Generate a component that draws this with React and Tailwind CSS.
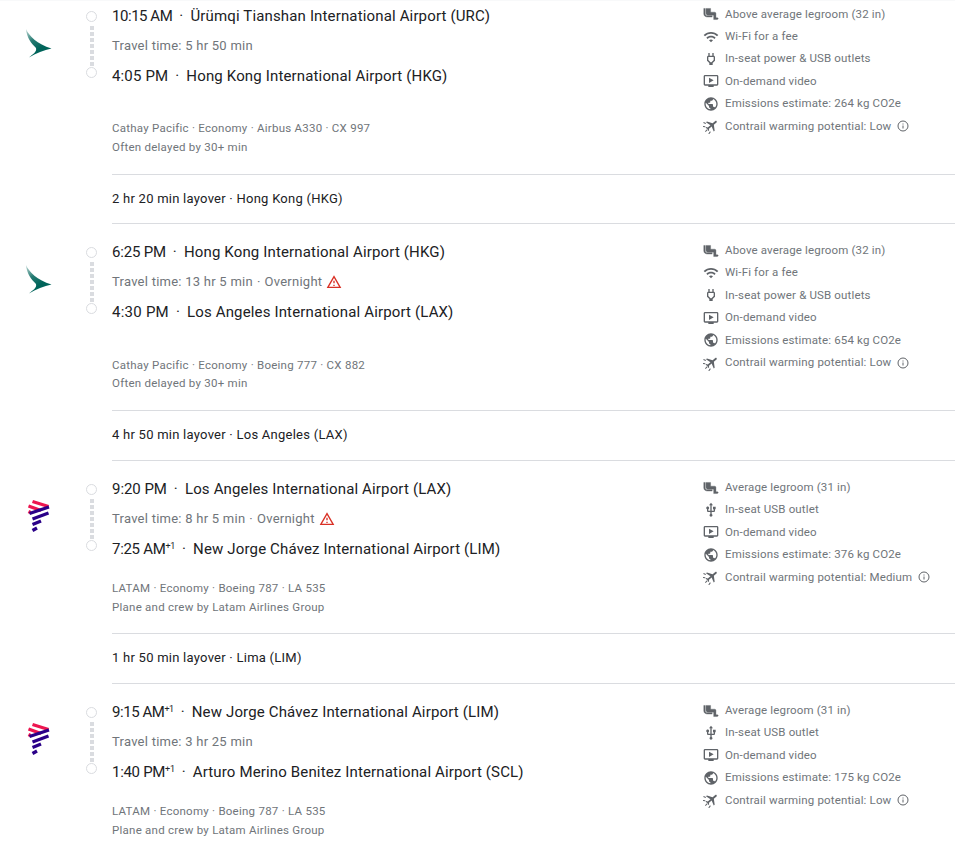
const P = {
  seat: "M5 12V3H3v9c0 2.76 2.24 5 5 5h6v-2H8c-1.66 0-3-1.34-3-3zm15.5 6H19v-7c0-1.1-.9-2-2-2h-5V3H6v8c0 1.65 1.35 3 3 3h7v7h4.5c.83 0 1.5-.67 1.5-1.5s-.67-1.5-1.5-1.5z",
  wifi: "M1 9l2 2c4.97-4.97 13.03-4.97 18 0l2-2C16.93 2.93 7.08 2.93 1 9zm8 8l3 3 3-3c-1.65-1.66-4.34-1.66-6 0zm-4-4l2 2c2.76-2.76 7.24-2.76 10 0l2-2C15.14 9.14 8.87 9.14 5 13z",
  power: "M16.01 7L16 3h-2v4h-4V3H8v4h-.01C7 7 6 8 6 9v5.49L9.5 18v3h5v-3l3.5-3.51V9c0-1-1-2-1.99-2zM16 13.66L12.67 17h-1.34L8 13.66V9.02L16 9z",
  usb: "M15 7v4h1v2h-3V5h2l-3-4-3 4h2v8H8v-2.07c.7-.37 1.2-1.08 1.2-1.93 0-1.21-.99-2.2-2.2-2.2-1.21 0-2.2.99-2.2 2.2 0 .85.5 1.56 1.2 1.93V13c0 1.11.89 2 2 2h3v3.05c-.71.37-1.2 1.1-1.2 1.95 0 1.22.99 2.2 2.2 2.2 1.21 0 2.2-.98 2.2-2.2 0-.85-.49-1.58-1.2-1.95V15h3c1.11 0 2-.89 2-2v-2h1V7h-4z",
  video: "M21 3H3c-1.11 0-2 .89-2 2v12c0 1.1.89 2 2 2h5v2h8v-2h5c1.1 0 1.99-.9 1.99-2L23 5c0-1.11-.9-2-2-2zm0 14H3V5h18v12zm-5-6l-7 4V7z",
  globe: "M12 2C6.48 2 2 6.48 2 12s4.48 10 10 10 10-4.48 10-10S17.52 2 12 2zm-1 17.93c-3.95-.49-7-3.85-7-7.93 0-.62.08-1.21.21-1.79L9 15v1c0 1.1.9 2 2 2v1.93zm6.9-2.54c-.26-.81-1-1.39-1.9-1.39h-1v-3c0-.55-.45-1-1-1H8v-2h2c.55 0 1-.45 1-1V7h2c1.1 0 2-.9 2-2v-.41c2.93 1.19 5 4.06 5 7.41 0 2.08-.8 3.97-2.1 5.39z",
};

function Icon({ name }) {
  if (name === "contrail") {
    return (
      <svg viewBox="0 0 24 24" className="w-4 h-4 shrink-0 fill-[#5f6368]">
        <path transform="rotate(50 12 12) translate(1 -1) scale(.95)" d="M21 16v-2l-8-5V3.5c0-.83-.67-1.5-1.5-1.5S10 2.67 10 3.5V9l-8 5v2l8-2.5V19l-2 1.5V22l3.5-1 3.5 1v-1.5L13 19v-5.5l8 2.5z" />
        <path d="M1 6l3.5 1.5-.6 1.4L.4 7.4zM0 12l3.5.4-.2 1.5L0 13.5zM3 20l3-3 1 1-3 3zM8 23.5l2.5-3.5 1.2.9-2.5 3.5z" />
      </svg>
    );
  }
  if (name === "seat") {
    return (
      <svg viewBox="2 -1 21 26" preserveAspectRatio="none" className="w-4 h-4 shrink-0 fill-[#5f6368] stroke-[#5f6368] stroke-[0.5]">
        <path d={P.seat} />
      </svg>
    );
  }
  return (
    <svg viewBox="0 0 24 24" className="w-4 h-4 shrink-0 fill-[#5f6368]">
      <path d={P[name]} />
    </svg>
  );
}

function Info() {
  return (
    <svg viewBox="0 0 24 24" className="w-3 h-3 fill-none stroke-[#5f6368] stroke-2">
      <circle cx="12" cy="12" r="10" />
      <path d="M12 11v6M12 7v2" />
    </svg>
  );
}

function Warn() {
  return (
    <svg viewBox="0 0 24 24" className="w-[16px] h-[16px] ml-[4px] fill-[#d93025]">
      <path d="M1 21h22L12 2 1 21zm3.47-2L12 5.99 19.53 19H4.47zM11 16h2v2h-2zm0-6h2v4h-2z" />
    </svg>
  );
}

function Cathay({ id }) {
  return (
    <svg viewBox="0 0 36 36" className="w-9 h-9 mt-[24px] ml-[22px]">
      <defs>
        <linearGradient id={id} x1="4" y1="4" x2="17" y2="24" gradientUnits="userSpaceOnUse">
          <stop offset="0" stopColor="#00645a" stopOpacity="0.25" />
          <stop offset="0.55" stopColor="#00645a" stopOpacity="0.85" />
          <stop offset="1" stopColor="#00645a" />
        </linearGradient>
      </defs>
      <path fill={`url(#${id})`} d="M4 4C7 11 15 19 29.5 23.5C22 25 14 28.5 7 32.5C11 29 15 27 14 23C9 18 5 13 4 4Z" />
    </svg>
  );
}

function Latam() {
  return (
    <svg viewBox="0 0 36 36" className="w-9 h-9 mt-[22px] ml-[22px]" fill="none" strokeWidth="3.3">
      <g stroke="#ed1650">
        <path d="M10.5 5.5L26.5 10.5" />
        <path d="M6.5 10L19 14.5" />
        <path d="M6.5 15.5L8.5 16.5" />
      </g>
      <g stroke="#2a0088">
        <path d="M7.5 17.5L27 11" />
        <path d="M10.5 23L26.5 17" />
        <path d="M10.5 28.5L19 25" />
        <path d="M10.5 34.5L15 32" />
      </g>
    </svg>
  );
}

function Timeline() {
  return (
    <div className="w-[11px] shrink-0 mt-[10px] flex flex-col items-center">
      <div className="w-[11px] h-[11px] rounded-full border-[1.5px] border-[#dadce0]" />
      <div className="mt-[4px] mb-[1px] flex flex-col gap-[2px]">
        {[0, 1, 2, 3, 4, 5, 6].map((i) => (
          <div key={i} className="w-[4px] h-[4px] bg-[#dadce0]" />
        ))}
      </div>
      <div className="w-[11px] h-[11px] rounded-full border-[1.5px] border-[#dadce0]" />
    </div>
  );
}

function Stop({ time, sup, place, cls }) {
  return (
    <div className="h-[30px] flex items-center text-[15px] tracking-[0.15px] text-[#202124] whitespace-nowrap">
      <span className={cls}>
        {time}
        {sup && <sup className="text-[9px] top-[-5px] leading-none">+1</sup>}
      </span>
      <span className="mx-[7px]">·</span>
      <span>{place}</span>
    </div>
  );
}

function Amenity({ icon, children, info }) {
  return (
    <div className="h-[22.4px] flex items-center gap-[6px] text-[11.5px] tracking-[0.15px] text-[#70757a] whitespace-nowrap">
      <Icon name={icon} />
      <span>{children}</span>
      {info && <Info />}
    </div>
  );
}

function Segment({ logo, a, b, travel, overnight, meta1, meta2, metaClass, amenities, ptClass }) {
  return (
    <div className="flex">
      <div className="w-[86px] shrink-0">{logo}</div>
      <Timeline />
      <div className="ml-[15px] flex-1 flex">
        <div className="w-[591px] shrink-0">
          <Stop {...a} />
          <div className="h-[30px] flex items-center text-[13px] tracking-[0.25px] text-[#70757a] whitespace-nowrap">
            {travel}
            {overnight && <><span className="mx-[4px]">·</span>Overnight<Warn /></>}
          </div>
          <Stop {...b} />
          <div className={`text-[11.5px] tracking-[0.25px] text-[#70757a] ${metaClass}`}>
            <div>{meta1}</div>
            <div>{meta2}</div>
          </div>
        </div>
        <div className={ptClass}>
          {amenities.map((m, i) => (
            <Amenity key={i} icon={m[0]} info={m[2]}>{m[1]}</Amenity>
          ))}
        </div>
      </div>
    </div>
  );
}

function Layover({ children, h }) {
  return (
    <div className={`ml-[112px] border-y border-[#dadce0] flex items-center text-[13px] tracking-[0.25px] text-[#202124] ${h}`}>
      {children}
    </div>
  );
}

export default function App() {
  const cxA = (co2) => [
    ["seat", "Above average legroom (32 in)"],
    ["wifi", "Wi-Fi for a fee"],
    ["power", "In-seat power & USB outlets"],
    ["video", "On-demand video"],
    ["globe", `Emissions estimate: ${co2} kg CO2e`],
    ["contrail", "Contrail warming potential: Low", true],
  ];
  const la = (co2, c) => [
    ["seat", "Average legroom (31 in)"],
    ["usb", "In-seat USB outlet"],
    ["video", "On-demand video"],
    ["globe", `Emissions estimate: ${co2} kg CO2e`],
    ["contrail", `Contrail warming potential: ${c}`, true],
  ];
  return (
    <div className="w-[955px] h-[845px] overflow-hidden bg-white font-['Roboto',sans-serif]">
      <div className="h-px bg-[#f8f9fa]" />
      <Segment
        logo={<Cathay id="cx1" />}
        a={{ time: "10:15 AM", cls: "tracking-[-0.45px]", place: "Ürümqi Tianshan International Airport (URC)" }}
        b={{ time: "4:05 PM", place: "Hong Kong International Airport (HKG)" }}
        travel="Travel time: 5 hr 50 min"
        meta1="Cathay Pacific · Economy · Airbus A330 · CX 997"
        meta2="Often delayed by 30+ min"
        metaClass="mt-[28px] pb-[17px] leading-[19px]"
        amenities={cxA(264)}
        ptClass="pt-[2px]"
      />
      <Layover h="h-[50px]">2 hr 20 min layover · Hong Kong (HKG)</Layover>
      <div className="h-[13px]" />
      <Segment
        logo={<Cathay id="cx2" />}
        a={{ time: "6:25 PM", cls: "tracking-[-0.2px]", place: "Hong Kong International Airport (HKG)" }}
        b={{ time: "4:30 PM", cls: "tracking-[0.25px]", place: "Los Angeles International Airport (LAX)" }}
        travel="Travel time: 13 hr 5 min"
        overnight
        meta1="Cathay Pacific · Economy · Boeing 777 · CX 882"
        meta2="Often delayed by 30+ min"
        metaClass="mt-[29px] pb-[18px] leading-[18px]"
        amenities={cxA(654)}
        ptClass="pt-[2.5px]"
      />
      <Layover h="h-[51px] pb-[2px]">4 hr 50 min layover · Los Angeles (LAX)</Layover>
      <div className="h-[13px]" />
      <Segment
        logo={<Latam />}
        a={{ time: "9:20 PM", cls: "tracking-[-0.05px]", place: "Los Angeles International Airport (LAX)" }}
        b={{ time: "7:25 AM", cls: "tracking-[-0.3px]", sup: true, place: "New Jorge Chávez International Airport (LIM)" }}
        travel="Travel time: 8 hr 5 min"
        overnight
        meta1="LATAM · Economy · Boeing 787 · LA 535"
        meta2="Plane and crew by Latam Airlines Group"
        metaClass="mt-[15px] pb-[16px] leading-[19px]"
        amenities={la(376, "Medium")}
        ptClass="pt-[2.5px]"
      />
      <Layover h="h-[51px] pb-[2px]">1 hr 50 min layover · Lima (LIM)</Layover>
      <div className="h-[13px]" />
      <Segment
        logo={<Latam />}
        a={{ time: "9:15 AM", cls: "tracking-[-0.45px]", sup: true, place: "New Jorge Chávez International Airport (LIM)" }}
        b={{ time: "1:40 PM", cls: "tracking-[-0.3px]", sup: true, place: "Arturo Merino Benitez International Airport (SCL)" }}
        travel="Travel time: 3 hr 25 min"
        meta1="LATAM · Economy · Boeing 787 · LA 535"
        meta2="Plane and crew by Latam Airlines Group"
        metaClass="mt-[15px] pb-[16px] leading-[19px]"
        amenities={la(175, "Low")}
        ptClass="pt-[2.5px]"
      />
    </div>
  );
}
